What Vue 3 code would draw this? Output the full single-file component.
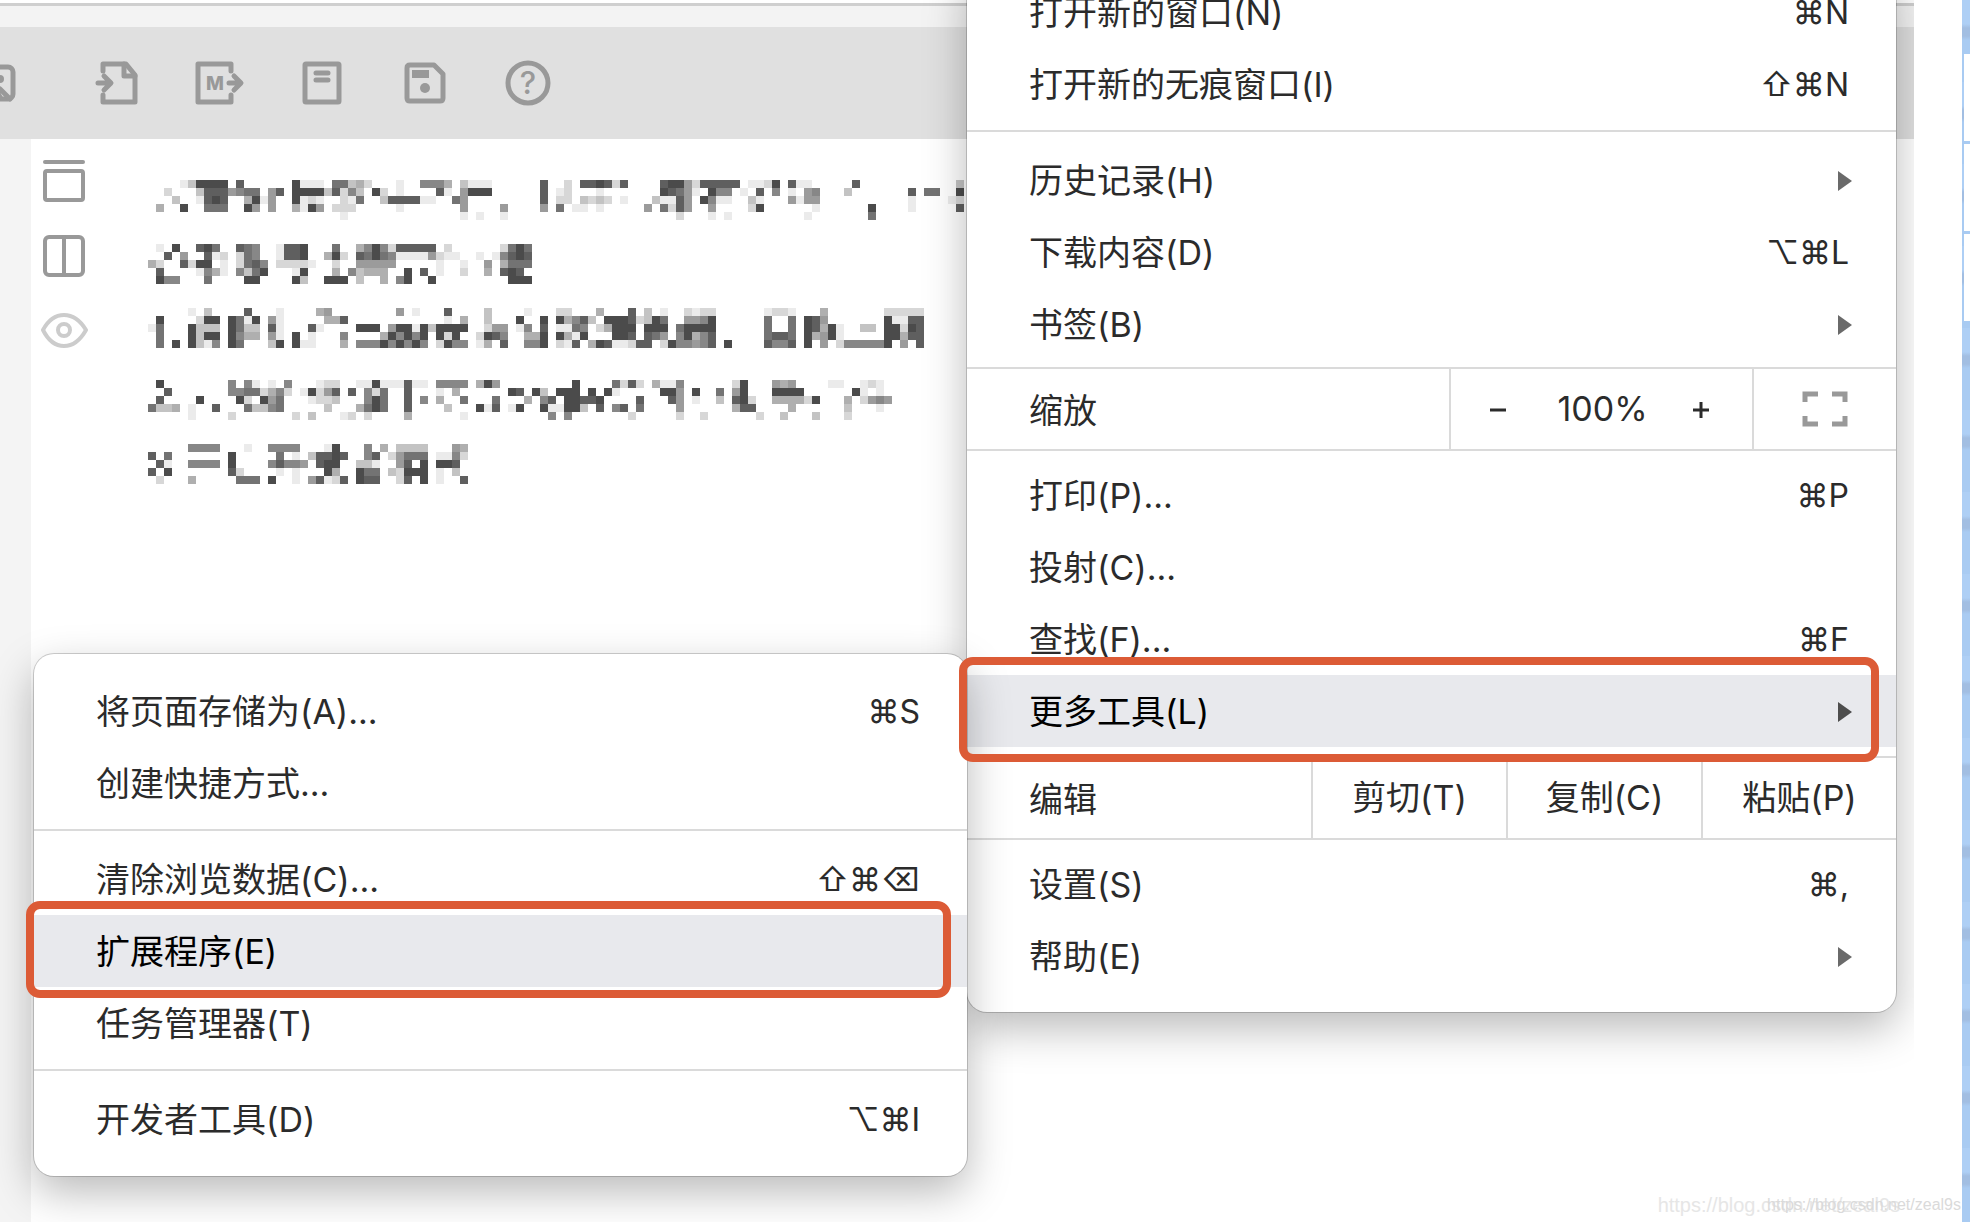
<script setup>
const openItems = [
  { label: '打开新的窗口(N)', keys: '⌘N' },
  { label: '打开新的无痕窗口(I)', keys: '⇧⌘N' },
]
const libraryItems = [
  { label: '历史记录(H)', arrow: true },
  { label: '下载内容(D)', keys: '⌥⌘L' },
  { label: '书签(B)', arrow: true },
]
const pageItems = [
  { label: '打印(P)...', keys: '⌘P' },
  { label: '投射(C)...' },
  { label: '查找(F)...', keys: '⌘F' },
]
const editActions = ['剪切(T)', '复制(C)', '粘贴(P)']
const settingItems = [
  { label: '设置(S)', keys: '⌘,' },
  { label: '帮助(E)', arrow: true },
]
const toolGroups = [
  [{ label: '将页面存储为(A)...', keys: '⌘S' }, { label: '创建快捷方式...' }],
  [
    { label: '清除浏览数据(C)...', keys: '⇧⌘⌫' },
    { label: '扩展程序(E)', active: true },
    { label: '任务管理器(T)' },
  ],
  [{ label: '开发者工具(D)', keys: '⌥⌘I' }],
]

// Pixelated note: row number, then "column:shades" runs (0 = clear, 9 = darkest)
const mosaicRows = [
  [0, '4:139999 11:8 18:9111 23:77342 31:1 34:6664 39:3111 49:8 52:2 54:889828 64:8995288888 75:11290811 88:8 101:3'],
  [1, '2:2 6:38885677 15:58 18:999938263092 31:1 36:81 39:5999 49:8012 56:1 64:987510966010806 80:1056 87:3 95:8077 101:9'],
  [2, '3:3 6:1898 12:4915 18:9121 24:217003888811 38:75 49:8022 54:3232010 63:3118509611 75:31 80:5155 95:1 100:12'],
  [3, '1:4 4:9 7:777 12:95 15:5 18:4195 23:222 31:1 39:5 44:5 49:5070110100 62:507285 70:5 75:29 83:1 90:9 95:1 101:8'],
  [4, '24:1 39:1010 44:1 66:2 70:101 82:1 90:7'],
  [8, '1:109 6:897 11:876 16:1889 23:7 26:4696288888 37:2 44:2797'],
  [9, '2:805 7:812 11:276 16:1889 22:492 26:8797611115211 41:1016898'],
  [10, '0:42008299 9:1 11:2786 16:22221 23:2 26:55555 36:1 39:1 42:504777'],
  [11, '1:8 6:1641 11:6379 18:19 23:4063444 32:908 36:1 39:2 42:40898'],
  [12, '1:966 7:7 12:99 18:93 22:999 26:3004 31:69009 45:999'],
  [16, '5:103 12:8 16:1 21:45 31:501 37:8 42:3 47:1 51:22 56:4 60:8 62:301 67:2122 77:1221 84:4 92:22222'],
  [17, '1:9 6:299 10:9719 15:51 22:448 37:104 42:3 46:9009 51:94683099982397 67:5569 77:7007 82:985 92:91188'],
  [18, '0:17 5:9333 10:9733 15:81 20:81 26:9990599193999900255 46:1608 51:1176024999 62:999079999 77:7007 82:98491 89:33 92:99298'],
  [19, '1:7 5:9399 10:9644 15:510901 24:6 29:496969 36:929 41:2986 47:449 51:9419 58:998 62:87506 67:9468 77:7887 82:94591 92:99488'],
  [20, '1:709093160970003909110 24:4 26:666969696 36:2966 41:1408 47:669 51:21804981128 62:80296 67:6568 72:9 77:8668 82:905026666690508'],
  [25, '1:9 10:6061 15:106 21:122 26:119111811 36:6666 41:495 53:9 58:7282 63:4116 73:29 78:545 85:11 89:121'],
  [26, '2:8 10:66772462 19:19258080627 32:8 36:104 45:98093099909091 64:995 68:9 71:7059 78:9999 88:9101'],
  [27, '1:8 6:9 11:9209 15:57 20:1223 27:697 32:806 36:4007 43:7 47:40680998890000800085 68:1 71:30892 78:444429 87:402565'],
  [28, '0:7334 5:1008 12:73367 22:3 26:4797 32:8 37:3 41:918019009119930806807 66:5 73:488 80:4 87:3 91:1'],
  [29, '5:1 10:2 18:203 24:1202 32:4 39:1 50:606 60:2 66:2 69:2 76:2 79:3 83:3 87:2'],
  [33, '5:6666 12:1 15:6666 22:19 27:604 31:3333 38:54'],
  [34, '0:807 10:9 16:701 20:38898 27:68 30:25777 36:1162'],
  [35, '1:81 5:6666 10:9 15:68665 21:899 26:331 31:5809 36:998'],
  [36, '0:809 10:82 16:101 22:94 26:977 30:32999 36:103'],
  [37, '1:2 5:4 11:777 15:9001 20:58128 26:988 31:2809 36:1008'],
]
const mosaic = mosaicRows.flatMap(([row, runs]) =>
  runs.split(' ').flatMap((run) => {
    const [start, shades] = run.split(':')
    return [...shades].map((shade, i) => {
      const g = 255 - Number(shade) * 20
      return { x: (Number(start) + i) * 8, y: row * 8, fill: `rgb(${g},${g},${g})`, shade }
    })
  }),
).filter((cell) => cell.shade !== '0')
</script>

<template>
  <div class="screen">
    <div class="window">
      <div class="tabstrip"></div>
      <header class="toolbar">
        <button type="button" class="tool first" aria-label="图片">
          <svg viewBox="0 0 56 56"><rect x="8" y="12" width="39" height="32" rx="5" /><circle class="solid" cx="34" cy="24" r="4" /><path d="M10 42l14-16 10 16M34 34L44 44" /></svg>
        </button>
        <button type="button" class="tool" aria-label="导入">
          <svg viewBox="0 0 56 56"><path d="M15 16V9H38L47 20V47H15V40" /><path d="M36 9V21H47M10 28H21M16 21L23 28L16 35" /></svg>
        </button>
        <button type="button" class="tool" aria-label="导出">
          <svg viewBox="0 0 56 56"><path d="M40 16V9H7V47H40V40M38 28H49M43 21L50 28L43 35" /><text class="mark" x="24" y="35" font-size="19">M</text></svg>
        </button>
        <button type="button" class="tool" aria-label="文档">
          <svg viewBox="0 0 56 56"><rect x="11" y="9" width="34" height="38" rx="1" /><path d="M22 18H34M22 25H34" /></svg>
        </button>
        <button type="button" class="tool" aria-label="保存">
          <svg viewBox="0 0 56 56"><path d="M13 10H37L46 19V43Q46 46 43 46H13Q10 46 10 43V13Q10 10 13 10Z" /><rect class="solid" x="15" y="15" width="17" height="8" /><circle class="solid" cx="28" cy="33" r="5" /></svg>
        </button>
        <button type="button" class="tool" aria-label="帮助">
          <svg viewBox="0 0 56 56"><circle cx="28" cy="28" r="20" /><text class="question" x="28" y="39" font-size="31">?</text></svg>
        </button>
      </header>
      <main class="editor">
        <nav class="views">
          <button type="button" class="view" aria-label="单栏">
            <svg viewBox="0 0 48 48"><path d="M4 5H42" /><rect x="4" y="14" width="38" height="29" rx="2" /></svg>
          </button>
          <button type="button" class="view" aria-label="双栏">
            <svg viewBox="0 0 48 48"><rect x="4" y="5" width="38" height="38" rx="4" /><path d="M23 5V43" /></svg>
          </button>
          <button type="button" class="view pale" aria-label="预览">
            <svg viewBox="0 0 48 48"><path d="M2 23Q10 8 23 8Q36 8 45 23Q36 39 23 39Q10 39 2 23Z" /><circle cx="23" cy="23" r="6" /></svg>
          </button>
        </nav>
        <svg class="note" viewBox="0 0 820 304" shape-rendering="crispEdges" aria-hidden="true">
          <rect v-for="(cell, i) in mosaic" :key="i" :x="cell.x" :y="cell.y" width="8" height="8" :fill="cell.fill" />
        </svg>
      </main>

      <div class="menu main-menu">
        <button v-for="item in openItems" :key="item.label" type="button" class="item">
          <span>{{ item.label }}</span><kbd>{{ item.keys }}</kbd>
        </button>
        <hr />
        <button v-for="item in libraryItems" :key="item.label" type="button" class="item">
          <span>{{ item.label }}</span>
          <i v-if="item.arrow" class="arrow"></i><kbd v-else>{{ item.keys }}</kbd>
        </button>
        <div class="split after-items">
          <span class="name">缩放</span>
          <div class="zoom">
            <button type="button" aria-label="缩小"><svg viewBox="0 0 18 18"><path d="M1 10H17" /></svg></button>
            <span class="percent">100%</span>
            <button type="button" aria-label="放大"><svg viewBox="0 0 18 18"><path d="M1 10H17M9 2V18" /></svg></button>
          </div>
          <button type="button" class="full" aria-label="全屏">
            <svg viewBox="0 0 46 36"><path d="M3 11V3H16M30 3H43V11M43 25V33H30M16 33H3V25" /></svg>
          </button>
        </div>
        <div class="group">
          <button v-for="item in pageItems" :key="item.label" type="button" class="item">
            <span>{{ item.label }}</span><kbd v-if="item.keys">{{ item.keys }}</kbd>
          </button>
          <div class="parent">
            <button type="button" class="item active"><span>更多工具(L)</span><i class="arrow"></i></button>
            <div class="menu sub-menu">
              <template v-for="(group, g) in toolGroups" :key="g">
                <hr v-if="g" />
                <button v-for="item in group" :key="item.label" type="button" class="item" :class="{ active: item.active }">
                  <span>{{ item.label }}</span><kbd v-if="item.keys">{{ item.keys }}</kbd>
                  <i v-if="item.active" class="ring"></i>
                </button>
              </template>
            </div>
            <i class="ring wide"></i>
          </div>
        </div>
        <div class="split">
          <span class="name">编辑</span>
          <button v-for="action in editActions" :key="action" type="button" class="action">{{ action }}</button>
        </div>
        <div class="group">
          <button v-for="item in settingItems" :key="item.label" type="button" class="item">
            <span>{{ item.label }}</span>
            <i v-if="item.arrow" class="arrow"></i><kbd v-else>{{ item.keys }}</kbd>
          </button>
        </div>
      </div>
    </div>
    <div class="gutter"></div>
    <aside class="desktop"><div v-for="n in 3" :key="n" class="card"></div></aside>
    <p class="watermark large">https://blog.csdn.net/zeal9s</p>
    <p class="watermark small">https://blog.csdn.net/zeal9s</p>
  </div>
</template>

<style>
body { margin: 0; background: #fff; }
</style>

<style scoped>
.screen {
  position: relative;
  display: flex;
  min-height: 100vh;
  overflow: hidden;
  font-family: Inter, "Noto Sans CJK SC", sans-serif;
  font-size: 34px;
  color: #2b2b2b;
}
.screen *, .screen { box-sizing: border-box; }
button {
  margin: 0;
  padding: 0;
  border: 0;
  background: none;
  font: inherit;
  color: inherit;
}
svg { display: block; }
.window {
  position: relative;
  flex: 1;
  display: flex;
  flex-direction: column;
  overflow: hidden;
}
.tabstrip {
  height: 24px;
  margin-top: 3px;
  border-top: 3px solid #cfcfcf;
  background: #f3f3f3;
}
.toolbar {
  display: flex;
  align-items: center;
  gap: 47px;
  height: 112px;
  background: #e0e0e0;
}
.tool svg { width: 56px; height: 56px; }
.tool.first { margin-left: -34px; margin-right: 19px; }
.tool svg, .view svg {
  fill: none;
  stroke: #999;
  stroke-width: 5;
  stroke-linecap: round;
  stroke-linejoin: round;
}
.tool .solid, .tool text { fill: #999; stroke: none; }
.tool text { font-family: Inter, sans-serif; text-anchor: middle; }
.tool .mark { font-weight: 800; }
.tool .question { font-weight: 500; }
.editor {
  flex: 1;
  display: flex;
  align-items: flex-start;
  border-left: 31px solid #f4f4f4;
}
.views {
  display: flex;
  flex-direction: column;
  gap: 27px;
  padding: 18px 0 0 10px;
}
.view svg { width: 48px; height: 48px; stroke-width: 4; }
.view.pale svg { stroke: #ccc; }
.note { width: 820px; height: 304px; margin: 41px 0 0 59px; }

.menu {
  position: absolute;
  background: #fff;
  border-radius: 20px;
  box-shadow: 0 0 0 1px rgba(0, 0, 0, 0.18), 0 16px 44px rgba(0, 0, 0, 0.28);
}
.main-menu { top: -40px; right: 18px; width: 929px; padding: 16px 0 11px; }
.sub-menu { top: -21px; right: 100%; width: 933px; padding: 21px 0; z-index: 1; }
.item {
  position: relative;
  display: flex;
  align-items: center;
  justify-content: space-between;
  width: 100%;
  height: 72px;
  padding: 2px 47px 0 62px;
  line-height: 48px;
  text-align: left;
  white-space: nowrap;
}
.item.active { background: #e8e9ed; color: #000; }
kbd { font: inherit; font-size: 32px; }
.arrow {
  margin-right: -3px;
  border-left: 14px solid #6a6a6a;
  border-top: 10px solid transparent;
  border-bottom: 10px solid transparent;
}
.active .arrow { border-left-color: #4d4d4d; }
hr { height: 2px; margin: 10px 0 12px; border: 0; background: #dadada; }
.parent { position: relative; }
.ring {
  position: absolute;
  inset: -14px 16px -11px -8px;
  border: 8px solid #dc5b36;
  border-radius: 14px;
  z-index: 2;
  pointer-events: none;
}
.ring.wide { inset: -18px 17px -15px -8px; }
.group { padding: 8px 0 9px; }
.split {
  display: flex;
  height: 84px;
  border: solid #dadada;
  border-width: 2px 0;
  line-height: 48px;
}
.after-items { margin-top: 7px; }
.name { flex: 1; padding: 18px 0 0 62px; }
.zoom {
  display: flex;
  align-items: center;
  justify-content: space-between;
  width: 305px;
  padding: 0 42px 0 38px;
  border: solid #dadada;
  border-width: 0 2px;
}
.percent { margin-left: 6px; }
.zoom svg { width: 18px; height: 18px; fill: none; stroke: #2b2b2b; stroke-width: 3; }
.full { display: flex; align-items: center; justify-content: center; width: 142px; }
.full svg { width: 46px; height: 36px; fill: none; stroke: #999; stroke-width: 5; }
.action { width: 195px; border-left: 2px solid #dadada; }

.gutter { width: 48px; background: #fff; }
.desktop {
  display: flex;
  flex-direction: column;
  gap: 3px;
  width: 8px;
  padding: 54px 0 0 2px;
  background: repeating-linear-gradient(#aecff5 0 24px, #a2bee2 28px 36px, #a9cbf2 40px 82px);
}
.card { height: 87px; background: #fff; }
.watermark {
  position: absolute;
  bottom: 5px;
  margin: 0;
  font-family: "Liberation Sans", sans-serif;
  line-height: 24px;
  white-space: nowrap;
  color: #e6e6e6;
}
.large { right: 70px; font-size: 20px; }
.small { right: 9px; font-size: 16px; color: #dadada; }
</style>
